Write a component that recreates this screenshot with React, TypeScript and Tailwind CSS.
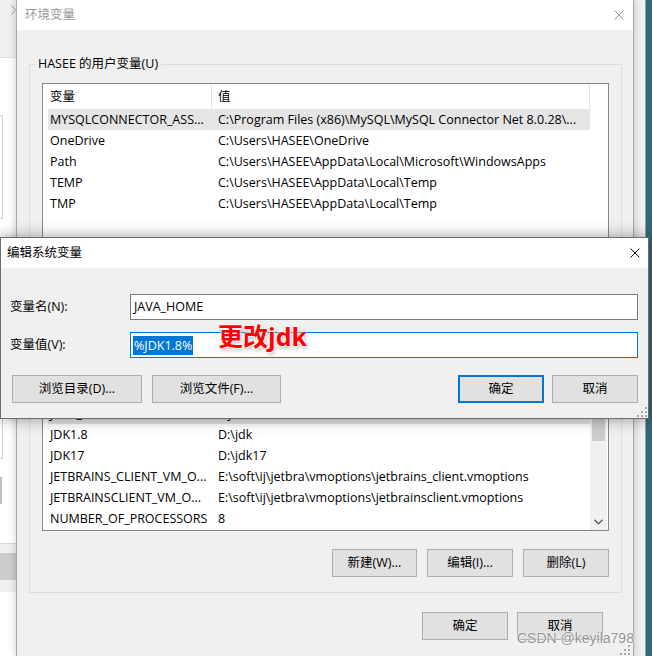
const FONT = "font-['Open_Sans','Noto_Sans_CJK_SC',sans-serif]";

type Row = { name: string; value: string; selected?: boolean };

const USER_VARS: Row[] = [
  {
    name: "MYSQLCONNECTOR_ASS...",
    value: "C:\\Program Files (x86)\\MySQL\\MySQL Connector Net 8.0.28\\...",
    selected: true,
  },
  { name: "OneDrive", value: "C:\\Users\\HASEE\\OneDrive" },
  { name: "Path", value: "C:\\Users\\HASEE\\AppData\\Local\\Microsoft\\WindowsApps" },
  { name: "TEMP", value: "C:\\Users\\HASEE\\AppData\\Local\\Temp" },
  { name: "TMP", value: "C:\\Users\\HASEE\\AppData\\Local\\Temp" },
];

// 上面几行被编辑框挡住了，只留看得见的
const SYS_VARS: Row[] = [
  { name: "JAVA_HOME", value: "%JDK1.8%", selected: true },
  { name: "JDK1.8", value: "D:\\jdk" },
  { name: "JDK17", value: "D:\\jdk17" },
  { name: "JETBRAINS_CLIENT_VM_O...", value: "E:\\soft\\ij\\jetbra\\vmoptions\\jetbrains_client.vmoptions" },
  { name: "JETBRAINSCLIENT_VM_O...", value: "E:\\soft\\ij\\jetbra\\vmoptions\\jetbrainsclient.vmoptions" },
  { name: "NUMBER_OF_PROCESSORS", value: "8" },
];

function CloseX({ color }: { color: string }) {
  return (
    <svg width="10" height="10" viewBox="0 0 10 10" className="shrink-0">
      <path d="M0.5 0.5L9.5 9.5M9.5 0.5L0.5 9.5" stroke={color} strokeWidth="1" />
    </svg>
  );
}

function Grip() {
  return (
    <svg width="10" height="10" viewBox="0 0 10 10">
      {[
        [8, 0],
        [8, 4],
        [4, 4],
        [8, 8],
        [4, 8],
        [0, 8],
      ].map(([x, y]) => (
        <rect key={`${x}-${y}`} x={x} y={y} width="2" height="2" fill="#a8a8a8" />
      ))}
    </svg>
  );
}

function VarRow({ row }: { row: Row }) {
  return (
    <div className={`flex h-[21px] w-[542px] shrink-0 items-center pt-[2px] ${row.selected ? "bg-[#e5e5e5]" : ""}`}>
      <span className="w-[163px] shrink-0 overflow-hidden whitespace-nowrap pl-[2px]">{row.name}</span>
      <span className="overflow-hidden whitespace-nowrap pl-[7px]">{row.value}</span>
    </div>
  );
}

function Btn({ children, w, primary }: { children: React.ReactNode; w: string; primary?: boolean }) {
  return (
    <button
      className={`flex h-[28px] items-center justify-center whitespace-nowrap bg-[#e1e1e1] ${w} ${
        primary ? "border-2 border-[#0078d7]" : "border border-[#adadad]"
      }`}
    >
      {children}
    </button>
  );
}

// 背景里的系统属性窗口，只露出左边一条
function SystemWindow() {
  return (
    <div className="absolute left-0 top-0 h-full w-[646px] border-r border-[#a0a0a0] bg-[#f0f0f0]">
      <div className="flex w-[16px] flex-col">
        <div className="flex h-[57px] items-start pl-[11px] pt-[5px]">
          <svg width="5" height="10" viewBox="0 0 5 10">
            <path d="M0.5 0.5L4.5 5L0.5 9.5" stroke="#a0a0a0" fill="none" />
          </svg>
        </div>
        <div className="flex h-[486px] flex-col border-t border-[#e3e3e3] bg-white">
          <div className="mt-[57px] h-[104px] w-[3px] border-y border-r border-[#d2d2d2]" />
          <div className="mt-[170px] h-[70px] w-[3px] border-y border-r border-[#d2d2d2]" />
          <div className="mt-[18px] h-[27px] w-[2px] border border-[#bdbdbd] bg-[#e1e1e1]" />
        </div>
        <div className="h-[10px] border-t border-[#dadada] bg-[#f0f0f0]" />
        <div className="h-[27px] bg-[#cccccc]" />
        <div className="h-[12px] bg-[#f0f0f0]" />
        <div className="h-[70px] bg-white" />
      </div>
    </div>
  );
}

function EnvWindow() {
  return (
    <div className="absolute left-[16px] top-0 flex h-[658px] w-[618px] flex-col border-x border-[#a8a8a8] bg-[#f0f0f0] shadow-[0_0_8px_rgba(0,0,0,0.2)]">
      <div className="flex h-[30px] items-center justify-between bg-white pl-[8px] pr-[9px] text-[#999999]">
        <span>环境变量</span>
        <CloseX color="#999999" />
      </div>

      <div className="pl-[12px] pt-[26px]">
        <fieldset className="w-[592px] border border-[#dcdcdc]">
          <legend className="ml-[5px] px-[3px] leading-[16px]">HASEE 的用户变量(U)</legend>
          <div className="px-[12px] pb-[15px]">
            <div className="mt-[11px] h-[160px] w-[567px] overflow-hidden border border-[#828790] bg-white">
              <div className="flex h-[25px] items-center">
                <span className="w-[169px] border-r border-[#e5e5e5] pl-[7px] leading-[25px]">变量</span>
                <span className="w-[378px] border-r border-[#e5e5e5] pl-[6px] leading-[25px]">值</span>
              </div>
              <div className="flex flex-col pl-[5px]">
                {USER_VARS.map((r) => (
                  <VarRow key={r.name} row={r} />
                ))}
              </div>
            </div>
            <div className="mt-[19px] h-[28px]" />
          </div>
        </fieldset>

        <fieldset className="mt-[10px] w-[592px] border border-[#dcdcdc]">
          <legend className="ml-[5px] px-[3px] leading-[16px]">系统变量(S)</legend>
          <div className="px-[12px] pb-[15px]">
            <div className="mt-[11px] flex h-[188px] w-[567px] border border-[#828790] bg-white">
              <div className="flex w-[547px] flex-col justify-end overflow-hidden pb-[1px] pl-[5px]">
                {SYS_VARS.map((r) => (
                  <VarRow key={r.name} row={r} />
                ))}
              </div>
              <div className="flex w-[17px] flex-col bg-[#f0f0f0]">
                <div className="h-[17px]" />
                <div className="flex-1 px-[2px]">
                  <div className="mt-[39px] h-[41px] bg-[#cdcdcd]" />
                </div>
                <div className="flex h-[17px] items-center justify-center">
                  <svg width="9" height="6" viewBox="0 0 9 6">
                    <path d="M0.5 0.8L4.5 4.8L8.5 0.8" stroke="#606060" strokeWidth="1.4" fill="none" />
                  </svg>
                </div>
              </div>
            </div>
            <div className="mt-[18px] flex justify-end gap-[10px]">
              <Btn w="w-[85px]">新建(W)...</Btn>
              <Btn w="w-[86px]">编辑(I)...</Btn>
              <Btn w="w-[86px]">删除(L)</Btn>
            </div>
          </div>
        </fieldset>

        <div className="mt-[19px] flex justify-end gap-[9px] pr-[30px]">
          <Btn w="w-[86px]">确定</Btn>
          <Btn w="w-[86px]">取消</Btn>
        </div>
      </div>

      <div className="absolute bottom-[3px] right-[3px]">
        <Grip />
      </div>
    </div>
  );
}

function EditDialog() {
  return (
    <div className="absolute left-0 top-[237px] flex h-[182px] w-[649px] flex-col border border-[#6e6e6e] bg-[#f0f0f0] shadow-[0_0_14px_rgba(0,0,0,0.4)]">
      <div className="flex h-[30px] items-center justify-between bg-white pl-[6px] pr-[8px]">
        <span>编辑系统变量</span>
        <CloseX color="#111111" />
      </div>

      <div className="flex flex-col pl-[9px] pr-[10px] pt-[26px]">
        <div className="flex h-[26px] items-center">
          <span className="w-[120px]">变量名(N):</span>
          <div className="flex h-[26px] w-[508px] items-center border border-[#7a7a7a] bg-white pl-[3px]">JAVA_HOME</div>
        </div>
        <div className="mt-[12px] flex h-[26px] items-center">
          <span className="w-[120px]">变量值(V):</span>
          <div className="flex h-[26px] w-[508px] items-center border border-[#0078d7] bg-white pl-[2px]">
            <span className="bg-[#0078d7] px-[1px] leading-[19px] text-white">%JDK1.8%</span>
          </div>
        </div>
        <div className="mt-[17px] flex justify-between pl-[2px]">
          <div className="flex gap-[10px]">
            <Btn w="w-[130px]">浏览目录(D)...</Btn>
            <Btn w="w-[129px]">浏览文件(F)...</Btn>
          </div>
          <div className="flex gap-[8px]">
            <Btn w="w-[86px]" primary>
              确定
            </Btn>
            <Btn w="w-[86px]">取消</Btn>
          </div>
        </div>
      </div>

      {/* 截图上的红字标注 */}
      <span className="absolute left-[217px] top-[83px] text-[25px] font-bold leading-[30px] text-[#ff0000] [text-shadow:0_0_2px_#fff,0_0_2px_#fff,0_0_3px_#fff,1px_2px_4px_rgba(0,0,0,0.35)]">
        更改jdk
      </span>

      <div className="absolute bottom-[1px] right-[1px]">
        <Grip />
      </div>
    </div>
  );
}

export default function App() {
  return (
    <div className={`relative h-[656px] w-[652px] overflow-hidden bg-[#2f6a73] text-[12.5px] text-black ${FONT}`}>
      <SystemWindow />
      <EnvWindow />
      <EditDialog />
      <span className="absolute left-[517px] top-[629px] font-['Liberation_Sans',sans-serif] text-[14px] leading-[18px] text-[rgba(110,110,110,0.75)] [text-shadow:0_0_1px_#fff,0_0_2px_#fff]">
        CSDN @keyila798
      </span>
    </div>
  );
}
